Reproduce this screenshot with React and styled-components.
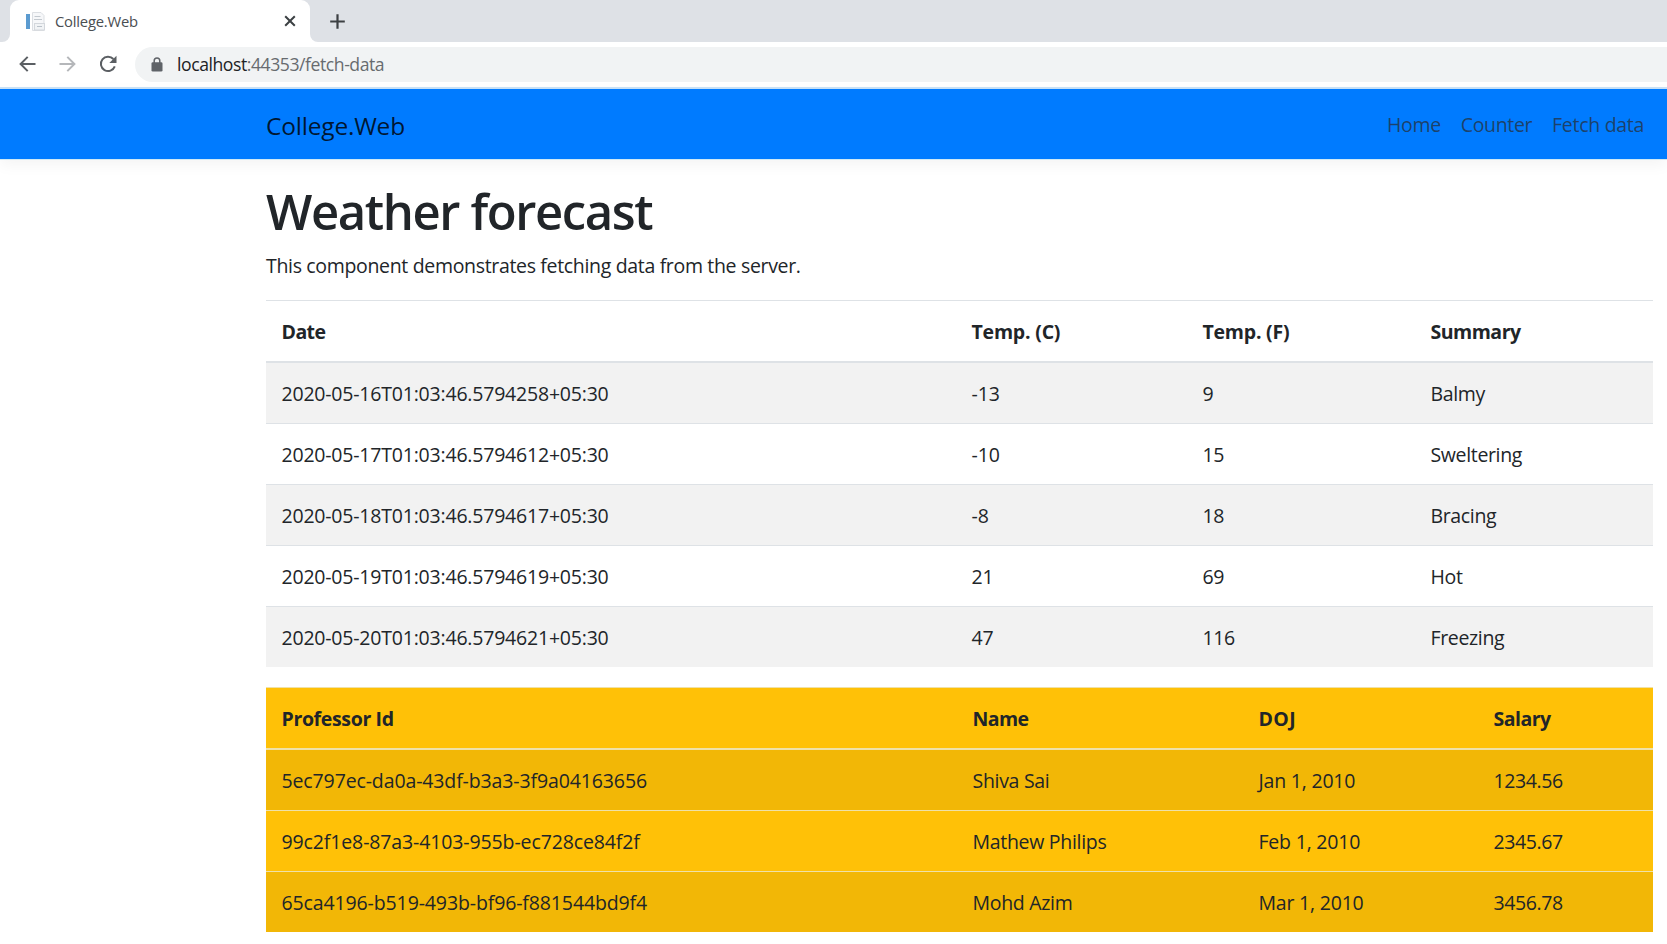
import React from "react";
import styled, { createGlobalStyle } from "styled-components";

const GlobalStyle = createGlobalStyle`
  * { box-sizing: border-box; }
  body {
    margin: 0;
    background: #fff;
    color: #212529;
    font-family: "Open Sans", "Noto Sans", sans-serif;
    font-size: 19.5px;
    line-height: 30px;
    overflow: hidden;
  }
`;

const Window = styled.div`
  width: 100%;
  height: 944px;
  overflow: hidden;
`;

const TabStrip = styled.div`
  display: flex;
  height: 42px;
  background: #dee1e6;
`;

const StripEdge = styled.div`
  width: 10px;
  background: #fff;
  &::before {
    content: "";
    display: block;
    height: 42px;
    background: #dee1e6;
    border-bottom-right-radius: 8px;
  }
`;

const Tab = styled.div`
  display: flex;
  align-items: center;
  width: 300px;
  padding: 0 14px 0 15px;
  border-radius: 9px 9px 0 0;
  background: #fff;
`;

const TabTitle = styled.span`
  flex: 1;
  margin-left: 9px;
  padding-bottom: 1px;
  color: #4a4e52;
  font-size: 14.8px;
  letter-spacing: -0.22px;
  line-height: 20px;
`;

const StripRest = styled.div`
  flex: 1;
  background: #fff;
`;

const StripRestFill = styled.div`
  display: flex;
  align-items: center;
  height: 42px;
  padding-left: 20px;
  border-bottom-left-radius: 8px;
  background: #dee1e6;
`;

const Toolbar = styled.div`
  display: flex;
  align-items: center;
  height: 47px;
  padding: 0 0 1px 19px;
  border-bottom: 2px solid #c9e2f8;
`;

const NavIcons = styled.div`
  display: flex;
  align-items: center;
  gap: 23px;
  width: 116px;
`;

const AddressBar = styled.div`
  display: flex;
  align-items: center;
  flex: 1;
  height: 35px;
  padding-left: 16px;
  border-radius: 18px 0 0 18px;
  background: #f1f3f4;
`;

const Url = styled.span`
  margin-left: 14px;
  color: #676b6f;
  font-size: 17.6px;
  letter-spacing: -0.44px;
  line-height: 24px;
`;

const Host = styled.span`
  color: #202124;
`;

const Navbar = styled.nav`
  display: flex;
  align-items: center;
  justify-content: space-between;
  height: 70px;
  padding: 3px 23px 0 266px;
  background: #007bff;
  box-shadow: 0 1px 0 #cfe9f6, 0 5px 15px rgba(0, 0, 0, 0.05);
`;

const Brand = styled.a`
  color: rgba(0, 0, 0, 0.82);
  font-size: 24.5px;
  letter-spacing: -0.2px;
`;

const NavLinks = styled.div`
  display: flex;
  gap: 20px;
  padding-bottom: 2px;
`;

const NavLink = styled.a`
  color: rgba(40, 45, 50, 0.74);
  letter-spacing: ${(p) => p.$spacing}px;
`;

const Content = styled.main`
  padding: 20px 14px 0 266px;
`;

const Title = styled.h1`
  margin: 2px 0 10px;
  font-size: 49px;
  font-weight: 600;
  letter-spacing: -1.4px;
  line-height: 60px;
`;

const Intro = styled.p`
  margin: 0 0 19px;
  letter-spacing: -0.33px;
`;

const Table = styled.table`
  width: 100%;
  margin-bottom: 20px;
  border-collapse: separate;
  border-spacing: 0;
  table-layout: fixed;
  background: ${(p) => (p.$warning ? "#ffc107" : "#fff")};
  --rule: ${(p) => (p.$warning ? "#efe1a8" : "#dee2e6")};
`;

const Col = styled.col`
  width: ${(p) => p.$width}px;
`;

const HeadCell = styled.th`
  padding: 16px 15px 14px 15.5px;
  border-top: 1px solid var(--rule);
  border-bottom: 2px solid var(--rule);
  font-weight: 700;
  letter-spacing: ${(p) => p.$spacing}px;
  text-align: left;
  white-space: nowrap;
`;

const Cell = styled.td`
  padding: 16px 15px 14px 15.5px;
  border-top: 1px solid var(--rule);
  letter-spacing: ${(p) => p.$spacing}px;
  white-space: nowrap;
`;

const Row = styled.tr`
  &:nth-child(odd) {
    background: rgba(0, 0, 0, 0.05);
  }
  &:first-child td {
    border-top: 0;
  }
`;

function Favicon() {
  return (
    <svg width="21" height="21" viewBox="0 0 21 21">
      <rect x="1" y="3" width="4" height="15" fill="#5b9bd0" />
      <path d="M7.5 1.5H16l3 3V19.5H7.5z" fill="#f6f7f9" stroke="#dcdfe3" />
      <path d="M9.5 5.5h6M9 8.5h8" stroke="#c3c9cf" />
      <rect x="9.5" y="12.5" width="10" height="6.5" fill="#f1f3f5" stroke="#d3d7dc" />
      <path d="M12 15.5h5" stroke="#b9c1c9" />
    </svg>
  );
}

function CloseIcon() {
  return (
    <svg width="12" height="12" viewBox="0 0 12 12" stroke="#3c4043" strokeWidth="2">
      <path d="M1.2 1.2l9.6 9.6M10.8 1.2l-9.6 9.6" />
    </svg>
  );
}

function PlusIcon() {
  return (
    <svg width="15" height="15" viewBox="0 0 15 15" stroke="#3c4043" strokeWidth="2.2">
      <path d="M7.5 .2v14.6M.2 7.5h14.6" />
    </svg>
  );
}

function ArrowIcon({ color, back }) {
  return (
    <svg width="17" height="16" viewBox="0 0 17 16" fill="none" stroke={color} strokeWidth="2">
      <path d={back ? "M16.5 8H2M8.7 .9L1.6 8l7.1 7.1" : "M.5 8H15M8.3 .9L15.4 8l-7.1 7.1"} />
    </svg>
  );
}

function ReloadIcon() {
  return (
    <svg width="18" height="18" viewBox="0 0 18 18">
      <path d="M14.4 4A7.2 7.2 0 1 0 15.8 11.4" fill="none" stroke="#5b5f63" strokeWidth="2" />
      <path d="M17.5 .8V8h-7.2z" fill="#5b5f63" />
    </svg>
  );
}

function LockIcon() {
  return (
    <svg width="12" height="15" viewBox="0 0 12 15">
      <path d="M3.2 6V3.8a2.8 2.8 0 0 1 5.6 0V6" fill="none" stroke="#5f6368" strokeWidth="1.5" />
      <rect x=".5" y="5.2" width="11" height="9.3" rx="1.3" fill="#5f6368" />
    </svg>
  );
}

const forecasts = {
  widths: [690, 231, 228, 238],
  head: ["Date", "Temp. (C)", "Temp. (F)", "Summary"],
  headSpacing: [-0.55, -0.2, -0.22, -0.5],
  spacing: [-0.2, -0.1, -0.35, -0.35],
  rows: [
    ["2020-05-16T01:03:46.5794258+05:30", "-13", "9", "Balmy"],
    ["2020-05-17T01:03:46.5794612+05:30", "-10", "15", "Sweltering"],
    ["2020-05-18T01:03:46.5794617+05:30", "-8", "18", "Bracing"],
    ["2020-05-19T01:03:46.5794619+05:30", "21", "69", "Hot"],
    ["2020-05-20T01:03:46.5794621+05:30", "47", "116", "Freezing"],
  ],
};

const professors = {
  widths: [691, 286, 235, 175],
  head: ["Professor Id", "Name", "DOJ", "Salary"],
  headSpacing: [-0.35, -0.6, 0.4, -0.5],
  spacing: [-0.12, -0.3, -0.2, -0.38],
  rows: [
    ["5ec797ec-da0a-43df-b3a3-3f9a04163656", "Shiva Sai", "Jan 1, 2010", "1234.56"],
    ["99c2f1e8-87a3-4103-955b-ec728ce84f2f", "Mathew Philips", "Feb 1, 2010", "2345.67"],
    ["65ca4196-b519-493b-bf96-f881544bd9f4", "Mohd Azim", "Mar 1, 2010", "3456.78"],
  ],
};

function DataTable({ data, warning }) {
  return (
    <Table $warning={warning}>
      <colgroup>
        {data.widths.map((w, i) => (
          <Col key={i} $width={w} />
        ))}
      </colgroup>
      <thead>
        <tr>
          {data.head.map((h, i) => (
            <HeadCell key={h} $spacing={data.headSpacing[i]}>{h}</HeadCell>
          ))}
        </tr>
      </thead>
      <tbody>
        {data.rows.map((row) => (
          <Row key={row[0]}>
            {row.map((value, i) => (
              <Cell key={i} $spacing={data.spacing[i]}>{value}</Cell>
            ))}
          </Row>
        ))}
      </tbody>
    </Table>
  );
}

export default function App() {
  return (
    <Window>
      <GlobalStyle />
      <TabStrip>
        <StripEdge />
        <Tab>
          <Favicon />
          <TabTitle>College.Web</TabTitle>
          <CloseIcon />
        </Tab>
        <StripRest>
          <StripRestFill>
            <PlusIcon />
          </StripRestFill>
        </StripRest>
      </TabStrip>
      <Toolbar>
        <NavIcons>
          <ArrowIcon back color="#5b5f63" />
          <ArrowIcon color="#b5b7ba" />
          <ReloadIcon />
        </NavIcons>
        <AddressBar>
          <LockIcon />
          <Url>
            <Host>localhost</Host>:44353/fetch-data
          </Url>
        </AddressBar>
      </Toolbar>
      <Navbar>
        <Brand>College.Web</Brand>
        <NavLinks>
          <NavLink $spacing={-0.35}>Home</NavLink>
          <NavLink $spacing={-0.35}>Counter</NavLink>
          <NavLink $spacing={-0.3}>Fetch data</NavLink>
        </NavLinks>
      </Navbar>
      <Content>
        <Title>Weather forecast</Title>
        <Intro>This component demonstrates fetching data from the server.</Intro>
        <DataTable data={forecasts} />
        <DataTable data={professors} warning />
      </Content>
    </Window>
  );
}
